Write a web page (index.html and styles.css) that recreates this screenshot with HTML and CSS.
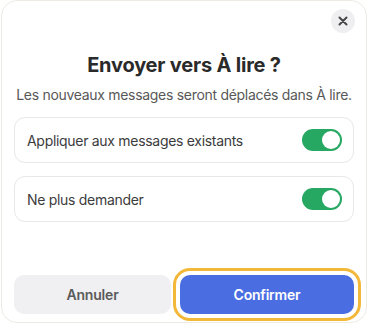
FILE: index.html
```html
<!DOCTYPE html>
<html lang="fr">

<head>
  <meta charset="utf-8">
  <title>Envoyer vers À lire</title>
  <link rel="stylesheet" href="styles.css">
</head>

<body>
  <div class="dialog">
    <div class="dialog-head">
      <button class="close" aria-label="Fermer">
        <svg width="10" height="10" viewBox="0 0 10 10">
          <path d="M1.5 1.5 L8.5 8.5 M8.5 1.5 L1.5 8.5" stroke="#474747" stroke-width="2" stroke-linecap="round" />
        </svg>
      </button>
    </div>

    <h1 class="title">Envoyer vers À lire ?</h1>
    <p class="subtitle">Les nouveaux messages seront déplacés dans À lire.</p>

    <div class="options">
      <label class="option">
        <span>Appliquer aux messages existants</span>
        <span class="toggle on"><span class="knob"></span></span>
      </label>
      <label class="option">
        <span>Ne plus demander</span>
        <span class="toggle on"><span class="knob"></span></span>
      </label>
    </div>

    <div class="actions">
      <button class="btn btn-cancel">Annuler</button>
      <button class="btn btn-confirm">Confirmer</button>
    </div>
  </div>
</body>

</html>
```

FILE: styles.css
```css
html, body {
  margin: 0;
  background: #ffffff;
}

body {
  font-family: Inter, "Noto Sans", sans-serif;
  letter-spacing: -0.3px;
}

.dialog {
  margin: 0 1px;
  height: 323px;
  box-sizing: border-box;
  border: 1px solid #eeebe3;
  border-radius: 16px;
  background: #fff;
  padding: 0 12px;
  display: flex;
  flex-direction: column;
}

.dialog-head {
  display: flex;
  justify-content: flex-end;
  padding-top: 8px;
  margin-right: -1px;
}

.close {
  width: 24px;
  height: 24px;
  border: none;
  border-radius: 50%;
  background: #efeff1;
  padding: 0;
  display: flex;
  align-items: center;
  justify-content: center;
}

.title {
  margin: 20px 0 0;
  font-size: 20px;
  line-height: 24px;
  font-weight: 700;
  color: #2a2a2a;
  text-align: center;
  letter-spacing: -0.2px;
}

.subtitle {
  margin: 8px 0 0;
  font-size: 14px;
  line-height: 20px;
  color: #585858;
  text-align: center;
  white-space: nowrap;
}

.options {
  margin-top: 12px;
  display: flex;
  flex-direction: column;
  gap: 13px;
}

.option {
  height: 46px;
  box-sizing: border-box;
  border: 1px solid #e8e8ea;
  border-radius: 11px;
  padding: 0 11px 0 12px;
  display: flex;
  align-items: center;
  justify-content: space-between;
  font-size: 14px;
  color: #3c3c3c;
}

.toggle {
  width: 40px;
  height: 22px;
  border-radius: 11px;
  background: #d6d6d9;
  display: flex;
  align-items: center;
  padding: 0 2px;
  box-sizing: border-box;
}

.toggle.on {
  background: #26a862;
  justify-content: flex-end;
}

.knob {
  width: 18px;
  height: 18px;
  border-radius: 50%;
  background: #fff;
}

.actions {
  margin-top: auto;
  margin-bottom: 8px;
  display: grid;
  grid-template-columns: 157px 1fr;
  gap: 9px;
}

.btn {
  height: 39px;
  border: none;
  border-radius: 10px;
  font-family: inherit;
  font-size: 14px;
  font-weight: 600;
  letter-spacing: -0.2px;
}

.btn-cancel {
  background: #f0f0f2;
  color: #5a5a5a;
}

.btn-confirm {
  background: #4a6ee2;
  color: #fff;
  outline: 3px solid #f3b83a;
  outline-offset: 4px;
}
```
